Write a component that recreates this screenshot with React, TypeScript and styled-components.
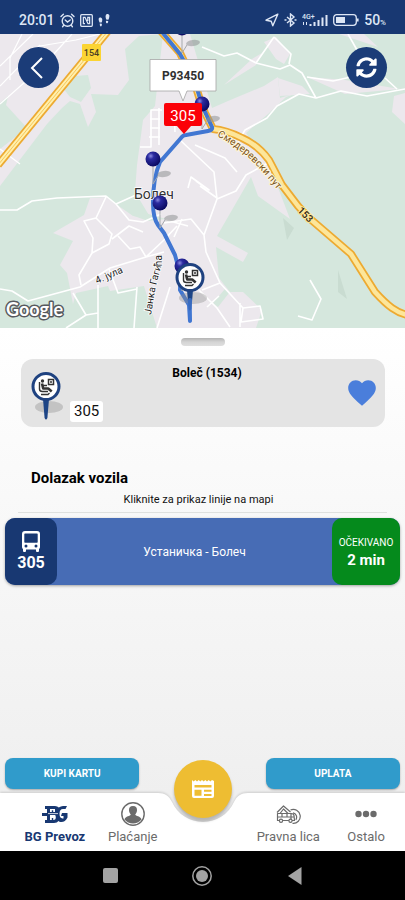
import React from "react";
import styled, { createGlobalStyle, css } from "styled-components";
import { FaSyncAlt } from "react-icons/fa";
import { IoMdHeart } from "react-icons/io";

const navy = "#183872";
const grey = "#6b6b6b";

const GlobalStyle = createGlobalStyle`
  *, *::before, *::after { box-sizing: border-box; }
  body { margin: 0; background: #000; font-family: Roboto, "Liberation Sans", sans-serif; color: #111; }
  button { font: inherit; border: 0; padding: 0; cursor: pointer; }
  h1, h2, p { margin: 0; }
  svg { display: block; }
`;

const Page = styled.div`
  display: flex;
  flex-direction: column;
  min-height: 100vh;
`;

const StatusBar = styled.header`
  display: flex;
  align-items: center;
  justify-content: space-between;
  height: 34px;
  padding: 6px 19px 0;
  background: ${navy};
  color: #dde6f5;
  font-size: 14px;
  font-weight: 500;
`;

const StatusGroup = styled.div`
  display: flex;
  align-items: center;
  gap: 5px;
`;

const Percent = styled.small`
  font-size: 8px;
`;

const MapArea = styled.section`
  position: relative;
  height: 294px;
  background: #d5e7dd;
  overflow: hidden;
`;

const MapCanvas = styled.svg`
  width: 100%;
  height: 100%;
`;

const MapButton = styled.button<{ $side: "left" | "right" }>`
  position: absolute;
  top: 13px;
  ${(p) => p.$side}: 18px;
  display: grid;
  place-items: center;
  width: 41px;
  height: 41px;
  border-radius: 50%;
  background: #1b3c78;
  color: #fff;
`;

const Sheet = styled.main`
  flex: 1;
  display: flex;
  flex-direction: column;
  padding: 10px 5px 4px;
  background: linear-gradient(#fff, #fafafa 30%, #efefef);
`;

const Handle = styled.div`
  align-self: center;
  width: 44px;
  height: 8px;
  border-radius: 4px;
  background: linear-gradient(#b4b4b4, #d4d4d4 50%, #dedede);
`;

const StopCard = styled.section`
  display: grid;
  grid-template-columns: 88px 1fr 80px;
  height: 68px;
  margin: 13px 15px 0 16px;
  border-radius: 12px;
  background: #e4e4e4;
`;

const StopBadge = styled.div`
  display: flex;
  align-items: flex-end;
  gap: 5px;
  padding: 0 0 5px 10px;
`;

const LineChip = styled.span`
  padding: 0 4px;
  border-radius: 3px;
  background: #fff;
  font-size: 15px;
  line-height: 21px;
`;

const StopName = styled.h1`
  padding-top: 6px;
  text-align: center;
  font-size: 12px;
  line-height: 16px;
  font-weight: 700;
  color: #000;
`;

const FavButton = styled.button`
  place-self: center end;
  margin-right: 6px;
  background: none;
  color: #4a7edb;
`;

const SectionTitle = styled.h2`
  margin: 41px 26px 0;
  font-size: 15px;
  line-height: 20px;
  font-weight: 700;
  color: #000;
`;

const Hint = styled.p`
  margin: 4px 13px 0;
  padding: 0 8px 4px 0;
  border-bottom: 1px solid #dfe1df;
  text-align: center;
  font-size: 11px;
  line-height: 16px;
`;

const Arrival = styled.button`
  display: flex;
  height: 67px;
  margin-top: 5px;
  border-radius: 10px;
  background: #476cb5;
  color: #fff;
  box-shadow: 0 1px 3px rgba(0, 0, 0, 0.35);
`;

const arrivalEnd = css`
  align-self: stretch;
  display: flex;
  flex-direction: column;
  align-items: center;
  justify-content: center;
  border-radius: 10px;
`;

const LineBox = styled.span`
  ${arrivalEnd}
  width: 52px;
  background: ${navy};
  font-size: 16px;
  line-height: 20px;
  font-weight: 700;
`;

const RouteName = styled.span`
  flex: 1;
  align-self: center;
  font-size: 12px;
`;

const EtaBox = styled.span`
  ${arrivalEnd}
  width: 68px;
  background: #058a1c;
`;

const EtaLabel = styled.span`
  font-size: 10px;
  line-height: 16px;
`;

const EtaValue = styled.span`
  font-size: 15px;
  line-height: 18px;
  font-weight: 700;
`;

const Actions = styled.div`
  display: flex;
  justify-content: space-between;
  margin-top: auto;
`;

const ActionButton = styled.button`
  width: 34%;
  height: 31px;
  border-radius: 8px;
  background: #309bcb;
  color: #fff;
  font-size: 10px;
  font-weight: 700;
  box-shadow: 0 1px 2px rgba(0, 0, 0, 0.3);
`;

const Nav = styled.nav`
  position: relative;
  height: 58px;
  background: #efefef;
`;

const NavSurface = styled.div`
  position: absolute;
  inset: 0;
  display: grid;
  grid-template-columns: 1fr 90px 1fr;
  filter: drop-shadow(0 -1px 1px rgba(0, 0, 0, 0.14));
`;

const NavSide = styled.div`
  background: #fff;
`;

const NavItems = styled.div`
  position: relative;
  display: grid;
  grid-template-columns: repeat(5, 1fr);
  height: 100%;
  padding-left: 16px;
`;

const NavItem = styled.button<{ $active?: boolean; $column: number }>`
  grid-column: ${(p) => p.$column};
  display: flex;
  flex-direction: column;
  align-items: center;
  gap: 2px;
  padding-top: 9px;
  background: none;
  color: ${(p) => (p.$active ? navy : grey)};
  font-size: 13px;
  line-height: 18px;
  font-weight: ${(p) => (p.$active ? 700 : 400)};
  white-space: nowrap;
`;

const Fab = styled.button`
  position: absolute;
  top: -33px;
  left: 50%;
  display: grid;
  place-items: center;
  width: 58px;
  height: 58px;
  margin-left: -29px;
  border-radius: 50%;
  background: #eebd32;
  color: #fff;
  box-shadow: 0 3px 3px rgba(0, 0, 0, 0.25);
`;

const SystemBar = styled.footer`
  display: grid;
  grid-template-columns: 1fr 1fr 1fr;
  align-items: center;
  height: 49px;
  padding: 0 64px;
  background: #000;
`;

const SystemKey = styled.button`
  display: grid;
  place-items: center;
  height: 100%;
  background: none;
  color: #a3a3a3;
`;

const AlarmIcon = () => (
  <svg width="15" height="15" viewBox="0 0 15 15" fill="none" stroke="currentColor" strokeWidth="1.4" strokeLinecap="round">
    <circle cx="7.5" cy="8" r="5.3" />
    <path d="M1 3.5 3.4 1.2M14 3.5 11.6 1.2M5.2 7l2.3 2 2.7-2M3.6 12.4l-1 1.3M11.4 12.4l1 1.3" />
  </svg>
);

const NfcIcon = () => (
  <svg width="13" height="13" viewBox="0 0 13 13" fill="none" stroke="currentColor" strokeWidth="1.3">
    <rect x=".7" y=".7" width="11.6" height="11.6" rx="1" />
    <path d="M5 9.7H3.4V3.3H5L8 9.7H9.6V3.3H7.8V7" />
  </svg>
);

const StepsIcon = () => (
  <svg width="12" height="14" viewBox="0 0 12 14" fill="currentColor">
    <path d="M.6 6c0-2 3.2-2.300 3.600 0 .2 1.500-.2 3-.6 3.600L1.600 9.400C1 8.500.6 7.200.6 6ZM1.800 10.600l2 .2c.5 3.400-2.200 3.600-2 .2ZM7.600 3c.3-3 3.500-2.500 3.800-.4.1 1.500-.4 3-1 4.200l-2.200-.4c-.4-1-.7-2.200-.6-3.400ZM8 7.800l2.200.3c.1 3.200-2.700 2.800-2.200-.1Z" />
  </svg>
);

const LocationIcon = () => (
  <svg width="14" height="14" viewBox="0 0 14 14" fill="none" stroke="currentColor" strokeWidth="1.4" strokeLinejoin="round">
    <path d="M12.8 1.2 1 7.2l5.2 1 1.6 4.6Z" />
  </svg>
);

const BluetoothIcon = () => (
  <svg width="13" height="14" viewBox="0 0 13 14" fill="none" stroke="currentColor" strokeWidth="1.4">
    <path d="m3 4 7 6-3.500 3V1L10 4l-7 6" />
    <path d="M.5 7h2M10.5 7h2" strokeWidth="1.6" />
  </svg>
);

const SignalIcon = () => (
  <svg width="26" height="14" viewBox="0 0 26 14" fill="currentColor">
    <text x="0" y="6" fontSize="7" fontWeight="500">4G+</text>
    <path d="M1 9h1v3H1ZM4 9h1v3H4ZM7.500 11h2v2h-2ZM11.500 9h2v4h-2ZM15.500 7h2v6h-2ZM19.500 4.500h2V13h-2ZM23.500 2h2v11h-2Z" />
  </svg>
);

const BatteryIcon = () => (
  <svg width="26" height="12" viewBox="0 0 26 12">
    <rect x=".7" y=".7" width="22.6" height="10.6" rx="3" fill="none" stroke="currentColor" strokeWidth="1.3" />
    <rect x="3" y="3" width="9" height="6" fill="currentColor" />
    <path d="M24.8 4.500v3" stroke="currentColor" strokeWidth="1.6" />
  </svg>
);

/* Stop pin: a ring with a seated passenger; the needle's tip is at (15, 47). */
const PinShape = () => (
  <g>
    <ellipse cx="18" cy="35" rx="14" ry="6" fill="#8d8d8d" opacity=".38" />
    <path d="M12 27h6l-1.600 19q-1.400 3-2.800 0Z" fill="#1d4586" />
    <circle cx="15" cy="14.5" r="13" fill="#fff" stroke="#1f4280" strokeWidth="3" />
    <circle cx="11.5" cy="9" r="1.7" fill="#333" />
    <path d="M8.500 10v7q0 2.500 3 2.500h5.500" fill="none" stroke="#333" strokeWidth="1.4" />
    <path d="m11 11.500 1.200 5h5l3.500 3" fill="none" stroke="#333" strokeWidth="2.6" strokeLinejoin="round" />
    <path d="M10 22.500h7l1.500-1.500M12 13.500h4" fill="none" stroke="#333" strokeWidth="1.3" />
    <path d="M17.500 7.500h5v5h-5ZM20 9v2" fill="none" stroke="#333" strokeWidth="1.5" />
  </g>
);

const BusIcon = () => (
  <svg width="20" height="22" viewBox="0 0 20 22">
    <path
      fill="currentColor"
      fillRule="evenodd"
      d="M4 0h12q3 0 3 3v13q0 1.400-1 2v2q0 1-1 1h-1q-1 0-1-1v-1.500H5V20q0 1-1 1H3q-1 0-1-1v-2q-1-.6-1-2V3q0-3 3-3Zm0 2.500q-.7 0-.7.7V11q0 .8.7.8h12q.7 0 .7-.8V3.200q0-.7-.7-.7ZM5 13.600a1.500 1.500 0 1 0 0 3 1.500 1.500 0 0 0 0-3Zm10 0a1.500 1.500 0 1 0 0 3 1.500 1.500 0 0 0 0-3Z"
    />
  </svg>
);

const TicketIcon = () => (
  <svg width="22" height="20" viewBox="0 0 22 20">
    <path
      fill="currentColor"
      fillRule="evenodd"
      d="M0 1l1.700 1.500L3.300 1 5 2.500 6.700 1l1.600 1.500L10 1l1.700 1.500L13.300 1 15 2.500 16.700 1l1.600 1.500L20 1l2 1v15q0 2-2 2H2q-2 0-2-2ZM2.500 6v2.500h17V6ZM2.500 10.800v6h7v-6ZM12 10.800v2h7.500v-2ZM12 15v1.900h7.500V15Z"
    />
  </svg>
);

const BgLogo = () => (
  <svg width="26" height="24" viewBox="0 0 26 24">
    <path
      fill="currentColor"
      fillRule="evenodd"
      d="M3 4h10q2.500 0 3.800 1.500Q18.800 4 21 4h4l-1.500 3H21q-3.500 0-3.500 4.800 0 4.400 3 4.700h1V14H19l1-3h5.500v4.500Q23 20.500 18.500 20q-1.200-.2-2-1-1.300 2-4.500 2H3v-3h2v-4H0v-3h5V7H3Zm5 3v3h1.800V8.200h1.400V10H13V7Zm0 6v5h1.800v-2h1.400v2q2.600 0 2.600-2.500T13 13Z"
    />
    <path d="M6 11.600h10" stroke="#fff" strokeWidth=".8" />
  </svg>
);

const PersonIcon = () => (
  <svg width="26" height="24" viewBox="0 0 26 24">
    <circle cx="13" cy="12" r="11.2" fill="none" stroke="currentColor" strokeWidth="1.4" />
    <path
      fill="currentColor"
      d="M13 4c3 0 4.300 2 4 4.600-.2 2.200-1.300 3.300-1.800 4 .2 1.600 5.500 1.700 6.300 4.800Q18 21.500 13 21.500T4.500 17.400c.8-3.100 6.100-3.200 6.300-4.800-.5-.7-1.600-1.800-1.800-4C8.700 6 10 4 13 4Z"
    />
  </svg>
);

const FleetIcon = () => (
  <svg width="26" height="24" viewBox="0 0 26 24" fill="none" stroke="currentColor" strokeWidth="1.2" strokeLinejoin="round">
    <path d="M2 10.500 8.500 4l7 6M5 11.500 8.500 7 13 11.500M2.500 11.500h14q2 0 2.500 2l.5 5H2.500ZM2.500 15h17M7 11.500V15M12 11.500V15M16 11.500V18" />
    <circle cx="6" cy="18.8" r="1.6" fill="#fff" />
    <circle cx="15.5" cy="18.8" r="1.6" fill="#fff" />
    <path d="M15.500 8a7 7 0 1 1 2 13.400M18 10.800a4.500 4.500 0 0 1 2.800 7" />
  </svg>
);

const DotsIcon = () => (
  <svg width="26" height="24" viewBox="0 0 26 24" fill="currentColor">
    <circle cx="5.5" cy="12" r="3.2" />
    <circle cx="13" cy="12" r="3.2" />
    <circle cx="20.5" cy="12" r="3.2" />
  </svg>
);

const BallPin = ({ x, y }: { x: number; y: number }) => (
  <g>
    <ellipse cx={x + 11} cy={y + 15} rx="7" ry="3" fill="#8f9294" opacity=".55" transform={`rotate(-8 ${x + 11} ${y + 15})`} />
    <path d={`M${x} ${y + 6}V${y + 25}l5-8`} fill="none" stroke="#a6a9ad" strokeWidth="1" />
    <circle cx={x} cy={y} r="7.5" fill="url(#ball)" />
  </g>
);

const mainRoad =
  "M160 30 180 53 195 84 200 100 205 113 213 129Q226 130 242 138 258 145 269 160L282 185 298 206 308 217 351 254 375 292Q385 303 392 308T407 315";
const busRoute =
  "M162 32 180 54Q194 78 198 92T206 114L212 127Q213 130 208 131L186 135Q183 135 181 138L160 162Q153 178 153 203 153 218 158 225L164 233 175 255Q181 275 180 290L189 305 190 321";

const TransitMap = () => (
  <MapCanvas viewBox="0 34 405 294" preserveAspectRatio="xMidYMid slice" role="img" aria-label="Mapa linije 305">
    <defs>
      <radialGradient id="ball" cx=".35" cy=".3" r=".7">
        <stop offset="0" stopColor="#8b8be0" />
        <stop offset=".3" stopColor="#2b2ba0" />
        <stop offset="1" stopColor="#0b0b62" />
      </radialGradient>
      <path id="smederevski" d="M217 136Q234 145 248 157 264 172 284 198" />
      <path id="janka" d="M151 315 155 291Q158 277 162 264V236" />
    </defs>
    <rect y="34" width="405" height="294" fill="#d5e7dd" />
    <g fill="#ece8ed">
      <path d="M0 34H163L139 36 125 49 129 80 118 95 91 94 96 112 88 127 80 104 70 101 62 108 47 124 0 186V149L27 128 6 105 9 92 25 82 40 68 0 103Z" />
      <path d="M163 34H190L212 108 228 101 264 86 278 77 280 98 300 92 286 97 268 114 246 133 272 172 290 219 258 196 251 177 217 236 248 253 243 262 216 247 219 278 230 292 243 292 262 310 256 328H157L144 286 110 291 108 286 76 293 73 304 67 273 60 265 73 241 53 233 84 215 90 198 106 197 133 216 150 217 135 192 137 165 143 120 155 106Z" />
      <path d="M224 85 252 59 262 53 256 65ZM264 42 276 37 290 54 284 64 276 59ZM278 78 302 86 310 94 280 96ZM307 77 345 80 400 89 345 94ZM339 34 378 47 364 34ZM394 96 405 93V124L392 112Z" />
    </g>
    <path d="M88 75 91 88 81 102 70 97 63 88 75 76ZM145 213 166 219 148 221 134 216ZM213 303 225 289 229 293 218 307Z" fill="#d5e7dd" />
    <path d="M283 218 294 228 287 240ZM338 270 347 299 338 292Z" fill="#c9dcd1" />
    <g fill="none" stroke="#fff" strokeWidth="1.6" strokeLinejoin="round">
      <path d="M0 104 42 67 72 34M0 86 40 45M10 80V58L22 34M0 66 33 34M40 46 76 40 100 34M0 149 20 164" strokeWidth="1.2" />
      <path d="M202 47 224 56 237 53 256 63 280 69 290 65 302 73 316 98 299 94 277 106 267 118 245 130 236 146M274 37 291 54 289 64M256 63 274 37M307 77 333 81 360 75M316 98 341 91 367 96 405 89M348 34 357 50M385 78 397 89" />
      <path d="M0 210H17L32 201 57 198 106 196 116 204 136 195M106 197 96 218 84 221 93 238 92 253 79 275 81 285M96 218 112 234 109 244 92 253M116 204 129 220 143 222 161 214M112 239 129 226 143 232M118 236 130 249 140 247 146 257 164 240M0 289 12 291 28 301 80 287 110 268 146 257 164 252M109 269 118 293 137 289M137 287 134 328M98 285V328M73 293 86 315 66 328M86 315 98 313M170 287 157 328" />
      <path d="M159 108V145M162 110H151V147H140M150 119H160M150 128H160M149 137H160M174 108 175 132M180 140 214 172 217 199 204 235 206 252 220 283 243 308 241 322 263 319 260 306 243 308M195 145 225 158 237 172M196 181 209 190 191 177 188 188M217 199 236 191 246 175 268 163M200 186 217 198M164 223 191 219 204 235M166 220 188 226M182 219 174 237M164 240 177 226M202 290 220 283M193 284 217 308 230 327M207 307 219 296M240 303V327" />
      <path d="M310 280 321 299 312 320 298 316" />
    </g>
    <g fill="none" strokeLinejoin="round">
      <path d="M-2 165 108 31" stroke="#edaa31" strokeWidth="8" />
      <path d="M-2 165 108 31" stroke="#fff0ad" strokeWidth="4.5" />
      <path d="M-2 165 108 31" stroke="#f5c55b" strokeWidth="1" />
      <path d={mainRoad} stroke="#edaa31" strokeWidth="8" />
      <path d={mainRoad} stroke="#fde69a" strokeWidth="4.5" />
    </g>
    <rect x="82" y="44" width="19" height="17" rx="1" fill="#fbd433" />
    <text x="91.5" y="56" textAnchor="middle" fontSize="9" fontWeight="500" fill="#4a4124">154</text>
    <g fill="#7a5420" stroke="#fff6db" strokeWidth="2" paintOrder="stroke" fontSize="10">
      <text><textPath href="#smederevski">Смедеревски пут</textPath></text>
    </g>
    <text transform="translate(297 211) rotate(45)" fontSize="10" fill="#302818" stroke="#ffe796" strokeWidth="2" paintOrder="stroke" fontWeight="500">153</text>
    <BallPin x={182} y={28} />
    <path d={busRoute} fill="none" stroke="#4177d2" strokeWidth="4" strokeLinejoin="round" strokeLinecap="round" />
    <text x="134" y="199" fontSize="14" fill="#333" stroke="#fff" strokeWidth="1.5" paintOrder="stroke">Болеч</text>
    <g fill="#252525" fontSize="10" stroke="#fff" strokeWidth="1.5" paintOrder="stroke">
      <text transform="translate(97 284) rotate(-24)">4. јула</text>
      <text><textPath href="#janka">Јанка Гагића</textPath></text>
    </g>
    <BallPin x={202} y={104} />
    <BallPin x={153} y={159} />
    <BallPin x={160} y={203} />
    <BallPin x={182} y={266} />
    <g transform="translate(175 263)"><PinShape /></g>
    <path d="M190 300V320" stroke="#4177d2" strokeWidth="4" strokeLinecap="round" opacity=".75" />
    <path d="M166 103h34q2 0 2 2v19q0 2-2 2h-9l-7 8-7-8h-11q-2 0-2-2v-19q0-2 2-2Z" fill="#fb0007" />
    <text x="183" y="121" textAnchor="middle" fontSize="15" fill="#fff">305</text>
    <path d="M150 59.500h66V91h-29l-4 10-4-10h-29Z" fill="#fff" stroke="#a5a5a5" strokeWidth=".8" />
    <text x="183" y="80" textAnchor="middle" fontSize="12" fontWeight="700" fill="#303030">P93450</text>
    <text x="6" y="316" fontFamily="Lato, sans-serif" fontSize="18" fontWeight="700" fill="#fff" stroke="#56595d" strokeWidth="3" strokeLinejoin="round" paintOrder="stroke">Google</text>
  </MapCanvas>
);

export default function App() {
  return (
    <Page>
      <GlobalStyle />
      <StatusBar>
        <StatusGroup>
          <span>20:01</span>
          <AlarmIcon />
          <NfcIcon />
          <StepsIcon />
        </StatusGroup>
        <StatusGroup>
          <LocationIcon />
          <BluetoothIcon />
          <SignalIcon />
          <BatteryIcon />
          <span>50<Percent>%</Percent></span>
        </StatusGroup>
      </StatusBar>

      <MapArea>
        <TransitMap />
        <MapButton $side="left" aria-label="Nazad">
          <svg width="18" height="22" viewBox="0 0 18 22" fill="none" stroke="currentColor" strokeWidth="2">
            <path d="M12 1 2 11 12 21" />
          </svg>
        </MapButton>
        <MapButton $side="right" aria-label="Osveži">
          <FaSyncAlt size={21} />
        </MapButton>
      </MapArea>

      <Sheet>
        <Handle />
        <StopCard>
          <StopBadge>
            <svg width="34" height="50" viewBox="0 0 34 50"><PinShape /></svg>
            <LineChip>305</LineChip>
          </StopBadge>
          <StopName>Boleč (1534)</StopName>
          <FavButton aria-label="Omiljeno stajalište"><IoMdHeart size={34} /></FavButton>
        </StopCard>
        <SectionTitle>Dolazak vozila</SectionTitle>
        <Hint>Kliknite za prikaz linije na mapi</Hint>
        <Arrival>
          <LineBox><BusIcon />305</LineBox>
          <RouteName>Устаничка - Болеч</RouteName>
          <EtaBox>
            <EtaLabel>OČEKIVANO</EtaLabel>
            <EtaValue>2 min</EtaValue>
          </EtaBox>
        </Arrival>
        <Actions>
          <ActionButton>KUPI KARTU</ActionButton>
          <ActionButton>UPLATA</ActionButton>
        </Actions>
      </Sheet>

      <Nav>
        <NavSurface>
          <NavSide />
          <svg width="90" height="58" viewBox="0 0 90 58">
            <path d="M0 0C7 0 11 3 14 9A34 34 0 0 0 76 9C79 3 83 0 90 0V58H0Z" fill="#fff" />
          </svg>
          <NavSide />
        </NavSurface>
        <NavItems>
          <NavItem $active $column={1}><BgLogo />BG Prevoz</NavItem>
          <NavItem $column={2}><PersonIcon />Plaćanje</NavItem>
          <NavItem $column={4}><FleetIcon />Pravna lica</NavItem>
          <NavItem $column={5}><DotsIcon />Ostalo</NavItem>
        </NavItems>
        <Fab aria-label="Karte"><TicketIcon /></Fab>
      </Nav>

      <SystemBar>
        <SystemKey aria-label="Nedavne aplikacije">
          <svg width="15" height="15" viewBox="0 0 15 15"><rect width="15" height="15" rx="2" fill="currentColor" /></svg>
        </SystemKey>
        <SystemKey aria-label="Početni ekran">
          <svg width="20" height="20" viewBox="0 0 20 20">
            <circle cx="10" cy="10" r="9.2" fill="none" stroke="currentColor" strokeWidth="1.5" />
            <circle cx="10" cy="10" r="6" fill="currentColor" />
          </svg>
        </SystemKey>
        <SystemKey aria-label="Sistem nazad">
          <svg width="14" height="18" viewBox="0 0 14 18"><path d="M13.500 0v18L0 9Z" fill="currentColor" /></svg>
        </SystemKey>
      </SystemBar>
    </Page>
  );
}
